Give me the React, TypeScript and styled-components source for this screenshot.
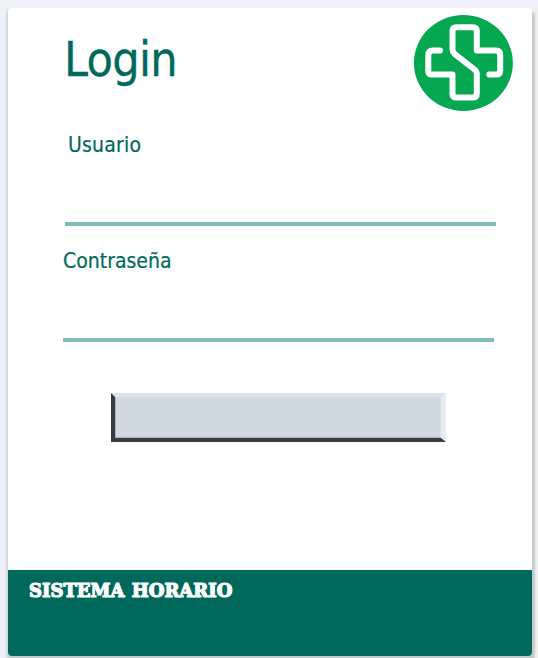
import React from "react";
import styled, { createGlobalStyle } from "styled-components";

const GlobalStyle = createGlobalStyle`
  * { box-sizing: border-box; }
  body { margin: 0; background: #eef1f8; overflow: hidden; }
`;

const Page = styled.main`
  width: 538px;
  height: 658px;
  padding: 8px 6px 2px 8px;
  background: linear-gradient(#ecf1fa, #f0f0f1 8px, transparent 9px), linear-gradient(90deg, #edf1f9 4px, #e4e6e9 8px, #eeeeef 530px, #efeff0);
  font-family: "DejaVu Sans Condensed", "DejaVu Sans", sans-serif;
  font-stretch: condensed;
  color: #00695c;
`;

const Card = styled.section`
  display: flex;
  flex-direction: column;
  height: 648px;
  background: #fff;
  border-radius: 4px;
  overflow: hidden;
  box-shadow: 3px 4px 2px #c6c8c9, -1px 3px 3px #c9cbcd;
`;

const Header = styled.header`
  display: flex;
  justify-content: space-between;
  height: 116px;
  padding: 7px 18px 0 56px;
`;

const Title = styled.h1`
  margin: 16px 0 0;
  font-size: 48px;
  line-height: 56px;
  font-weight: 400;
  letter-spacing: -0.7px;
  -webkit-text-stroke: 0.3px #00695c;
`;

const Logo = styled.svg`
  width: 101px;
  height: 97px;
`;

const Field = styled.label<{ $inset: number }>`
  display: flex;
  flex-direction: column;
  width: 431px;
  height: 116px;
  margin-left: ${(p) => p.$inset}px;
`;

const Caption = styled.span<{ $indent: number; $tracking: number }>`
  padding: 8px 0 0 ${(p) => p.$indent}px;
  font-size: 21px;
  line-height: 26px;
  letter-spacing: ${(p) => p.$tracking}px;
  -webkit-text-stroke: 0.2px #00695c;
`;

const Input = styled.input`
  flex: 1;
  min-height: 0;
  width: 100%;
  margin-bottom: 14px;
  padding: 0;
  border: 0;
  border-bottom: 4px solid #80bdb6;
  outline: 0;
  background: transparent;
`;

const Submit = styled.button`
  width: 335px;
  height: 49px;
  margin: 37px 0 0 103px;
  padding: 0;
  border-style: solid;
  border-width: 4px 5px 4px 4px;
  border-color: #dbe3e6 #e8edf0 #373d3f #373d3f;
  background: #d1d9e0;
  box-shadow: inset 1px -1px 1px #aab5b3, inset -1px 1px 1px #d9e1e5;
`;

const Footer = styled.footer`
  height: 86px;
  margin-top: auto;
  padding: 10px 0 0 21px;
  background: #00695c;
  color: #fff;
`;

const Brand = styled.strong`
  display: block;
  width: max-content;
  font: 700 18px/22px "DejaVu Serif", serif;
  letter-spacing: 0;
  word-spacing: 1px;
  -webkit-text-stroke: 1.2px #fff;
`;

export default function App() {
  return (
    <>
      <GlobalStyle />
      <Page>
        <Card>
          <Header>
            <Title>Login</Title>
            <Logo viewBox="413 15 101 97" aria-hidden="true">
              <ellipse cx="463.4" cy="63" rx="49.5" ry="48" fill="#05a850" />
              <path
                d="M440 50.5H433Q428.3 50.5 428.3 55V71Q428.3 74.6 432 74.6H452.5V94Q452.5 97.6 456.5 97.6H472.5Q476.8 97.6 476.8 93.5V74Q476.8 71.5 474.5 69.5L454.5 53.8Q452.5 52 452.5 49.5V31Q452.5 27.2 456.5 27.2H472.5Q476.8 27.2 476.8 31V50.5H496Q500.2 50.5 500.2 55V70.5Q500.2 74.6 496 74.6H489.3"
                fill="none"
                stroke="#fff"
                strokeWidth="6"
                strokeLinecap="round"
                strokeLinejoin="round"
              />
            </Logo>
          </Header>
          <Field $inset={57}>
            <Caption $indent={3} $tracking={0.2}>Usuario</Caption>
            <Input type="text" />
          </Field>
          <Field $inset={55}>
            <Caption $indent={0} $tracking={0}>Contraseña</Caption>
            <Input type="password" />
          </Field>
          <Submit type="button" aria-label="Login" />
          <Footer>
            <Brand>SISTEMA HORARIO</Brand>
          </Footer>
        </Card>
      </Page>
    </>
  );
}
